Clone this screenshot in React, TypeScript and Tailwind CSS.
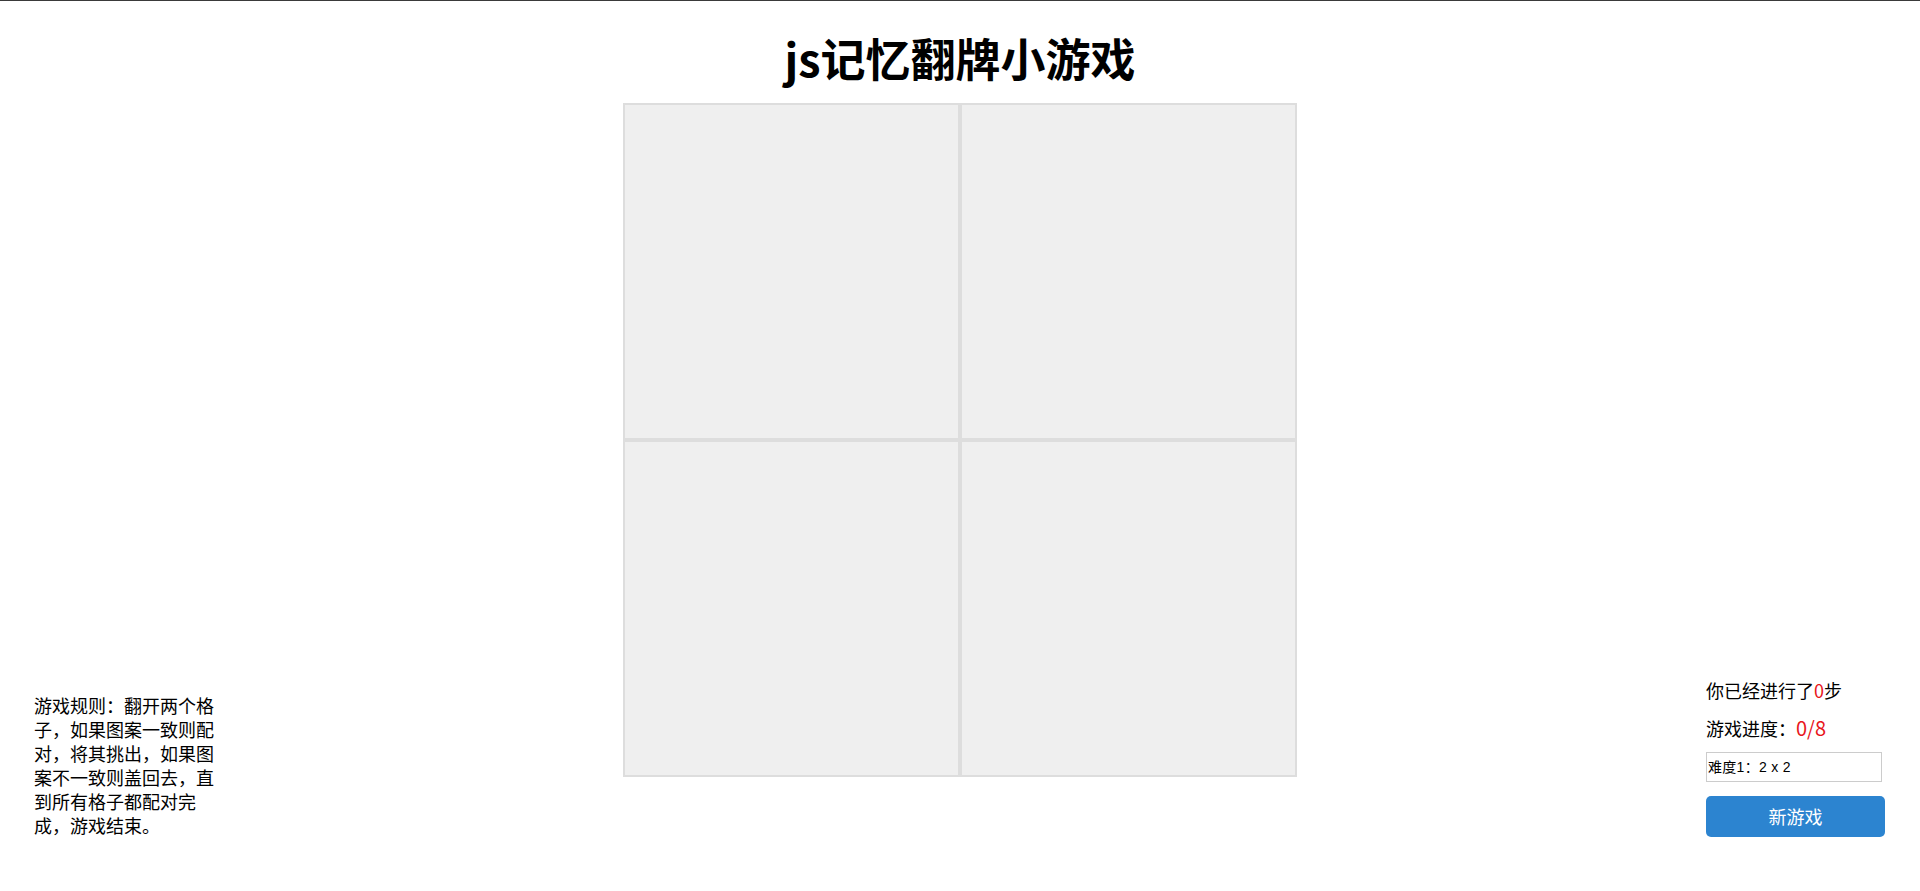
const cells = [0, 1, 2, 3];

export default function App() {
    return (
        <div
            className="h-[891px] w-full border-t border-[#3a3a3a] bg-white text-black grid grid-cols-[180px_1fr_180px] px-[34px] pb-[54px] overflow-hidden"
            style={{ fontFamily: '"Noto Sans CJK SC", "Noto Sans", sans-serif' }}
        >
            <div className="self-end">
                <p className="text-[18px] leading-[24px] w-[180px]">
                    游戏规则：翻开两个格子，如果图案一致则配对，将其挑出，如果图案不一致则盖回去，直到所有格子都配对完成，游戏结束。
                </p>
            </div>

            <div className="flex flex-col items-center">
                <h1 className="text-[45px] font-bold leading-[60px] mt-[27px] mb-[15px]">js记忆翻牌小游戏</h1>
                <div className="grid grid-cols-2">
                    {cells.map((c) => (
                        <div key={c} className="w-[337px] h-[337px] border-2 border-[#dddddd] bg-[#efefef]" />
                    ))}
                </div>
            </div>

            <div className="self-end flex flex-col w-[180px]">
                <p className="text-[18px] leading-[24px]">
                    你已经进行了<span className="text-[#e8161b]">0</span>步
                </p>
                <p className="text-[18px] leading-[24px] mt-[14px]">
                    游戏进度：<span className="text-[#e8161b] text-[20px]">0/8</span>
                </p>
                <div
                    className="mt-[12px] w-[176px] h-[30px] border border-[#cccccc] flex items-center pl-[1px] text-[14px] tracking-[0.3px]"
                    style={{ fontFamily: '"Liberation Sans", "Noto Sans CJK SC", sans-serif' }}
                >
                    难度1：2 x 2
                </div>
                <button className="mt-[14px] w-[179px] h-[41px] rounded-[5px] bg-[#2c84d0] text-white text-[18px]">
                    新游戏
                </button>
            </div>
        </div>
    );
}
